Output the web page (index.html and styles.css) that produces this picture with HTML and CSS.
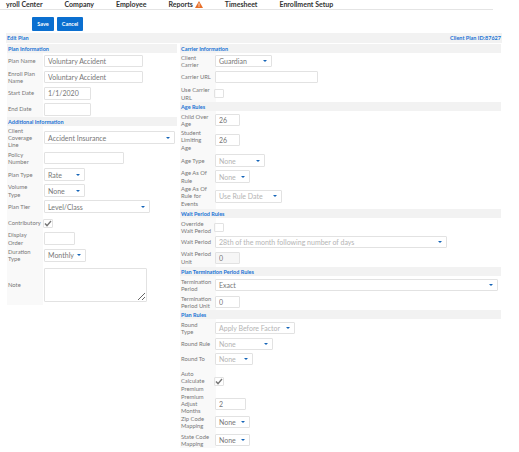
FILE: index.html
```html
<!DOCTYPE html>
<html lang="en">
<head>
  <meta charset="UTF-8">
  <title>Edit Plan</title>
  <link rel="stylesheet" href="styles.css">
</head>
<body>
  <div class="nav">
    <div>yroll Center</div>
    <div>Company</div>
    <div>Employee</div>
    <div class="nav-alert">Reports
      <svg width="8" height="7" viewBox="0 0 8 7"><path d="M4 0L8 7H0Z" fill="#e8702a"/><path d="M3.6 2.2h.8v2.6h-.8zM3.6 5.2h.8V6h-.8z" fill="#fff"/></svg>
    </div>
    <div>Timesheet</div>
    <div>Enrollment Setup</div>
  </div>

  <div class="actions">
    <button class="btn btn-save">Save</button>
    <button class="btn btn-cancel">Cancel</button>
  </div>

  <div class="title-bar">
    <span>Edit Plan</span>
    <span>Client Plan ID:87627</span>
  </div>

  <div class="columns">
    <div class="col-left">
      <div class="section">Plan Information</div>
      <div class="row h16"><label>Plan Name</label><input class="w100" value="Voluntary Accident"></div>
      <div class="row h16"><label>Enroll Plan<br>Name</label><input class="w100" value="Voluntary Accident"></div>
      <div class="row h16"><label>Start Date</label><input class="w48 tall" value="1/1/2020"></div>
      <div class="row h16"><label>End Date</label><input class="w48 tall"></div>
      <div class="section">Additional Information</div>
      <div class="row h23"><label>Client<br>Coverage<br>Line</label><div class="select tall w131">Accident Insurance<i></i></div></div>
      <div class="row h18"><label>Policy<br>Number</label><input class="w80"></div>
      <div class="row h15"><label>Plan Type</label><div class="select tall w41">Rate<i></i></div></div>
      <div class="row h17"><label>Volume<br>Type</label><div class="select tall w41">None<i></i></div></div>
      <div class="row h15"><label>Plan Tier</label><div class="select tall w106">Level/Class<i></i></div></div>
      <div class="row h18"><label>Contributory</label><div class="check"><svg width="8" height="7" viewBox="0 0 8 7"><path d="M1 3.5L3 5.6L7 1" fill="none" stroke="#777" stroke-width="1.4"/></svg></div></div>
      <div class="row h13"><label>Display<br>Order</label><input class="w31 tall"></div>
      <div class="row h20"><label>Duration<br>Type</label><div class="select tall w42">Monthly<i></i></div></div>
      <div class="row h40"><label>Note</label><textarea></textarea></div>
    </div>

    <div class="col-right">
      <div class="section">Carrier Information</div>
      <div class="row h16"><label>Client<br>Carrier</label><div class="select w57">Guardian<i></i></div></div>
      <div class="row h16"><label>Carrier URL</label><input class="w103"></div>
      <div class="row h17"><label>Use Carrier<br>URL</label><div class="check"></div></div>
      <div class="section">Age Rules</div>
      <div class="row h18"><label>Child Over<br>Age</label><input class="w25" value="26"></div>
      <div class="row h22"><label>Student<br>Limiting<br>Age</label><input class="w25" value="26"></div>
      <div class="row h19"><label>Age Type</label><div class="select off tall w50">None<i></i></div></div>
      <div class="row h13"><label>Age As Of<br>Rule</label><div class="select off tall w35">None<i></i></div></div>
      <div class="row h26"><label>Age As Of<br>Rule for<br>Events</label><div class="select off tall w67">Use Rule Date<i></i></div></div>
      <div class="section">Wait Period Rules</div>
      <div class="row h18"><label>Override<br>Wait Period</label><div class="check"></div></div>
      <div class="row h12"><label>Wait Period</label><div class="select off w232">28th of the month following number of days<i></i></div></div>
      <div class="row h19"><label>Wait Period<br>Unit</label><input class="w25 off" value="0"></div>
      <div class="section">Plan Termination Period Rules</div>
      <div class="row h18"><label>Termination<br>Period</label><div class="select w283">Exact<i></i></div></div>
      <div class="row h16"><label>Termination<br>Period Unit</label><input class="w25" value="0"></div>
      <div class="section">Plan Rules</div>
      <div class="row h18"><label>Round<br>Type</label><div class="select off w80">Apply Before Factor<i></i></div></div>
      <div class="row h14"><label>Round Rule</label><div class="select off w58">None<i></i></div></div>
      <div class="row h16"><label>Round To</label><div class="select off w38">None<i></i></div></div>
      <div class="row h28"><label>Auto<br>Calculate<br>Premium</label><div class="check"><svg width="8" height="7" viewBox="0 0 8 7"><path d="M1 3.5L3 5.6L7 1" fill="none" stroke="#777" stroke-width="1.4"/></svg></div></div>
      <div class="row h17"><label>Premium<br>Adjust<br>Months</label><input class="w31" value="2"></div>
      <div class="row h20"><label>Zip Code<br>Mapping</label><div class="select w35">None<i></i></div></div>
      <div class="row h16"><label>State Code<br>Mapping</label><div class="select w35">None<i></i></div></div>
    </div>
  </div>
</body>
</html>
```

FILE: styles.css
```css
html, body {
  margin: 0;
  padding: 0;
  height: 100%;
  overflow: hidden;
  background-color: white;
  font-family: "Lato", "Open Sans", sans-serif;
  color: #666;
}

.nav {
  display: flex;
  gap: 22px;
  width: 487px;
  height: 9px;
  padding-left: 6px;
  border-bottom: 1px solid #e4e4e4;
  font-size: 7px;
  font-weight: 700;
  line-height: 9px;
  color: #333;
  white-space: nowrap;
}

.nav-alert {
  display: flex;
  align-items: center;
  gap: 2px;
}

.actions {
  display: flex;
  gap: 3px;
  padding: 7px 0 2px 32px;
}

.btn {
  height: 14px;
  padding: 0;
  border: none;
  border-radius: 1px;
  background-color: #0a6fd0;
  color: white;
  font-family: inherit;
  font-size: 5.5px;
  font-weight: 700;
}

.btn-save { width: 22px; }
.btn-cancel { width: 26px; }

.title-bar {
  display: flex;
  justify-content: space-between;
  align-items: center;
  width: 496px;
  height: 10px;
  margin-left: 6px;
  box-sizing: border-box;
  padding: 0 1px;
  background-color: #f2f2f2;
  color: #1a73d4;
  font-size: 5.5px;
  font-weight: 700;
}

.columns {
  display: flex;
  gap: 3px;
  margin: 1px 0 0 7px;
}

.col-left { width: 170px; }
.col-right { width: 321px; }

.section {
  display: flex;
  align-items: center;
  height: 9px;
  padding-left: 1px;
  background-color: #f2f2f2;
  color: #1a73d4;
  font-size: 5.5px;
  font-weight: 700;
}

.row {
  display: flex;
  align-items: center;
  background: linear-gradient(to right, #f9f9f9 36px, white 36px);
}

.row label {
  box-sizing: border-box;
  flex: 0 0 37px;
  padding-left: 1px;
  font-size: 5.8px;
  line-height: 7.2px;
  color: #777;
  white-space: nowrap;
}

.col-right .row label { flex-basis: 35px; }

.h12 { height: 12px; }
.h13 { height: 13px; }
.h14 { height: 14px; }
.h15 { height: 15px; }
.h16 { height: 16px; }
.h17 { height: 17px; }
.h18 { height: 18px; }
.h19 { height: 19px; }
.h20 { height: 20px; }
.h22 { height: 22px; }
.h23 { height: 23px; }
.h26 { height: 26px; }
.h28 { height: 28px; }
.h40 { height: 40px; }

input, textarea, .select {
  box-sizing: border-box;
  flex: none;
  height: 12px;
  margin: 0;
  padding: 0 3px;
  border: 1px solid #e2e2e2;
  border-radius: 1px;
  background-color: white;
  color: #777;
  font-family: inherit;
  font-size: 7px;
  outline: none;
}

input.tall, .select.tall { height: 13px; }
input.off { background-color: #f6f6f6; }

.select {
  display: flex;
  align-items: center;
  justify-content: space-between;
  padding-right: 4px;
  white-space: nowrap;
}

.select.off { color: #b4b4b4; }

.select i {
  width: 0;
  height: 0;
  border-left: 2.5px solid transparent;
  border-right: 2.5px solid transparent;
  border-top: 2.5px solid #1565b8;
}

textarea {
  width: 103px;
  height: 34px;
  resize: both;
}

.check {
  display: flex;
  align-items: center;
  justify-content: center;
  box-sizing: border-box;
  width: 10px;
  height: 9px;
  margin-left: -1px;
  border: 1px solid #e2e2e2;
  border-radius: 1px;
}

.w25 { width: 25px; }
.w31 { width: 31px; }
.w35 { width: 35px; }
.w38 { width: 38px; }
.w41 { width: 41px; }
.w42 { width: 42px; }
.w48 { width: 47px; }
.w50 { width: 50px; }
.w57 { width: 57px; }
.w58 { width: 58px; }
.w67 { width: 67px; }
.w80 { width: 80px; }
.w100 { width: 99px; }
.w103 { width: 103px; }
.w106 { width: 106px; }
.w131 { width: 131px; }
.w232 { width: 232px; }
.w283 { width: 283px; }
```
